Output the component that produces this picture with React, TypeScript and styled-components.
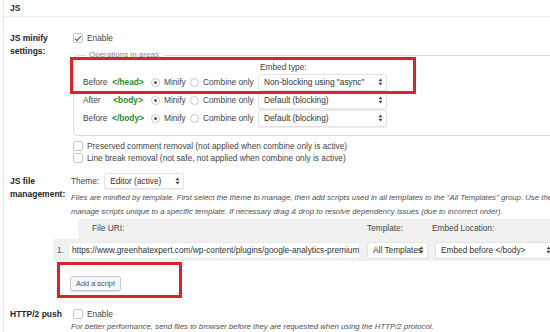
import React from "react";
import styled, { createGlobalStyle } from "styled-components";

const GlobalStyle = createGlobalStyle`
  html, body { margin: 0; padding: 0; background: #fff; }
  body {
    width: 550px; height: 332px; overflow: hidden;
    font-family: "Liberation Sans", Arial, sans-serif; color: #3c4146;
  }
  * { box-sizing: border-box; }
`;

const Page = styled.div`
  position: relative; margin-left: 3px; height: 332px;
  border-left: 1px solid #e6e6e6; overflow: hidden;
`;

const Header = styled.div`
  height: 17px; padding-left: 6px; border-bottom: 1px solid #efefef;
  font-size: 8.5px; font-weight: 700; color: #23282d;
  display: flex; align-items: center;
`;

const FormRow = styled.div<{ $top: number }>`
  display: flex; margin-top: ${(p: { $top: number }) => p.$top}px;
`;

const Th = styled.div`
  width: 67px; flex-shrink: 0; padding-left: 6px;
  font-size: 8.5px; font-weight: 700; color: #23282d; line-height: 13px;
`;

const Td = styled.div`
  flex: 1; min-width: 0; font-size: 8.3px; color: #444;
`;

const CheckLine = styled.div`
  display: flex; align-items: center; height: 12px; padding-left: 2px;
  white-space: nowrap;
`;

const Box = styled.span`
  width: 10px; height: 10px; border: 1px solid #c3c6c9; border-radius: 2px;
  background: #fff; margin-right: 4px; flex-shrink: 0;
  display: flex; align-items: center; justify-content: center;
`;

const Fieldset = styled.fieldset`
  margin: 6px 0 0 2px; padding: 2px 0 8px 9px; width: 500px;
  border: 1px solid #dcdcdc; border-radius: 4px;
`;

const Legend = styled.legend`
  margin-left: 3px; padding: 0 3px; font-size: 8px; line-height: 10px; color: #8a8a8a;
`;

const AreaRow = styled.div`
  display: flex; align-items: center; height: 18px; white-space: nowrap;
`;

const EmbedHead = styled.div`
  height: 10px; line-height: 10px; padding-left: 177px; color: #444; margin-bottom: 1px;
`;

const Place = styled.span`
  width: 25px;
`;

const Tag = styled.span`
  width: 40px; text-align: center; color: #2a8a22; font-weight: 700; margin-right: 3px;
`;

const Option = styled.span<{ $w: number }>`
  display: flex; align-items: center; width: ${(p: { $w: number }) => p.$w}px;
`;

const Radio = styled.span<{ $on?: boolean }>`
  width: 9px; height: 9px; border-radius: 50%; border: 1px solid #c3c6c9;
  background: #fff; margin-right: 4px; flex-shrink: 0;
  display: flex; align-items: center; justify-content: center;
  &::after {
    content: ""; width: 3px; height: 3px; border-radius: 50%;
    background: ${(p: { $on?: boolean }) => (p.$on ? "#555" : "transparent")};
  }
`;

const Select = styled.span<{ $w: number; $h?: number }>`
  position: relative; display: flex; align-items: center;
  width: ${(p: { $w: number }) => p.$w}px; height: ${(p: { $h?: number }) => p.$h ?? 17}px;
  padding-left: 5px; border: 1px solid #e3e3e3; border-radius: 3px;
  background: #fff; color: #333; white-space: nowrap; overflow: hidden; flex-shrink: 0;
  box-shadow: 0 1px 0 #eee;
`;

const Arrows = styled.svg`
  position: absolute; right: 3px; top: 50%; margin-top: -4px;
`;

const Spacer = styled.div<{ $h: number }>`
  height: ${(p: { $h: number }) => p.$h}px;
`;

const ThemeLine = styled.div`
  display: flex; align-items: center; gap: 5px; height: 16px; margin-top: -2px;
`;

const Desc = styled.div<{ $top?: number }>`
  font-size: 7.8px; font-style: italic; color: #505050; line-height: 14px;
  white-space: nowrap; margin-top: ${(p: { $top?: number }) => p.$top ?? 0}px;
`;

const Table = styled.div`
  margin: 0 0 0 -18px; width: 520px;
`;

const TableHead = styled.div`
  display: flex; align-items: center; height: 20px; margin-left: 25px;
  background: #f1f1f1; padding-left: 14px; padding-bottom: 3px; color: #444;
`;

const HeadCell = styled.span<{ $w: number }>`
  width: ${(p: { $w: number }) => p.$w}px; flex-shrink: 0;
`;

const TableRow = styled.div`
  display: flex; align-items: center; height: 22px; background: #f1f1f1;
  padding-left: 4px; gap: 7px;
`;

const Num = styled.span`
  width: 4px; color: #555;
`;

const UriInput = styled.span`
  width: 292px; height: 17px; background: #fff; border: 1px solid #eaeaea;
  display: flex; align-items: center; padding-left: 3px; color: #333;
  white-space: nowrap; overflow: hidden; font-size: 8.3px;
`;

const Button = styled.span`
  display: inline-flex; align-items: center; justify-content: center;
  width: 51px; height: 15px; margin-left: -1px;
  background: #f7f7f7; border: 1px solid #ccc; border-radius: 3px;
  box-shadow: 0 1px 0 #ddd; font-size: 7.4px; color: #555;
`;

const RedBox = styled.div<{ $x: number; $y: number; $w: number; $h: number }>`
  position: absolute; border: 3px solid #d8252b; pointer-events: none;
  left: ${(p: { $x: number }) => p.$x}px; top: ${(p: { $y: number }) => p.$y}px;
  width: ${(p: { $w: number }) => p.$w}px; height: ${(p: { $h: number }) => p.$h}px;
`;

const Check = () => (
  <svg width="8" height="7" viewBox="0 0 8 7">
    <path d="M1 3.6 L3 5.6 L7 1" fill="none" stroke="#555" strokeWidth="1.1" />
  </svg>
);

const Chevrons = () => (
  <Arrows width="5" height="8" viewBox="0 0 5 8">
    <path d="M0.5 3.2 L2.5 0.6 L4.5 3.2 Z M0.5 4.8 L2.5 7.4 L4.5 4.8 Z" fill="#444" />
  </Arrows>
);

const AREAS = [
  { place: "Before", tag: "</head>", embed: 'Non-blocking using "async"' },
  { place: "After", tag: "<body>", embed: "Default (blocking)" },
  { place: "Before", tag: "</body>", embed: "Default (blocking)" },
];

export default function App() {
  return (
    <>
      <GlobalStyle />
      <Page>
        <Header>JS</Header>

        <FormRow $top={15}>
          <Th>JS minify<br />settings:</Th>
          <Td>
            <CheckLine>
              <Box><Check /></Box>Enable
            </CheckLine>
            <Fieldset>
              <Legend>Operations in areas:</Legend>
              <EmbedHead>Embed type:</EmbedHead>
              {AREAS.map((a, i) => (
                <AreaRow key={i}>
                  <Place>{a.place}</Place>
                  <Tag>{a.tag}</Tag>
                  <Option $w={39}><Radio $on />Minify</Option>
                  <Option $w={68}><Radio />Combine only</Option>
                  <Select $w={129}>{a.embed}<Chevrons /></Select>
                </AreaRow>
              ))}
            </Fieldset>
            <Spacer $h={4} />
            <CheckLine><Box />Preserved comment removal (not applied when combine only is active)</CheckLine>
            <CheckLine><Box />Line break removal (not safe, not applied when combine only is active)</CheckLine>
          </Td>
        </FormRow>

        <FormRow $top={11}>
          <Th>JS file<br />management:</Th>
          <Td>
            <ThemeLine>
              Theme:
              <Select $w={80} $h={16}>Editor (active)<Chevrons /></Select>
            </ThemeLine>
            <Desc $top={2}>
              Files are minified by template. First select the theme to manage, then add scripts used in all templates to the "All Templates" group. Use the
              <br />
              manage scripts unique to a specific template. If necessary drag &amp; drop to resolve dependency issues (due to incorrect order).
            </Desc>
            <Table>
              <TableHead>
                <HeadCell $w={275}>File URI:</HeadCell>
                <HeadCell $w={65}>Template:</HeadCell>
                <HeadCell $w={100}>Embed Location:</HeadCell>
              </TableHead>
              <TableRow>
                <Num>1.</Num>
                <UriInput>https://www.greenhatexpert.com/wp-content/plugins/google-analytics-premium</UriInput>
                <Select $w={61}>All Templates<Chevrons /></Select>
                <Select $w={120}>Embed before &lt;/body&gt;<Chevrons /></Select>
              </TableRow>
            </Table>
            <Spacer $h={15} />
            <Button>Add a script</Button>
          </Td>
        </FormRow>

        <FormRow $top={17}>
          <Th>HTTP/2 push</Th>
          <Td>
            <CheckLine><Box />Enable</CheckLine>
            <Desc>
              For better performance, send files to browser before they are requested when using the HTTP/2 protocol.
              <br />
              Not supported by "Disk: Enhanced" page cache engine.
            </Desc>
          </Td>
        </FormRow>

        <RedBox $x={66} $y={57} $w={346} $h={37} />
        <RedBox $x={53} $y={262} $w={125} $h={36} />
      </Page>
    </>
  );
}
